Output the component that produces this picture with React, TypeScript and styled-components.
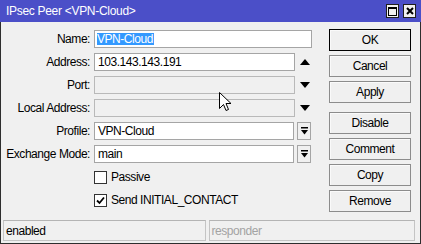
import styled, { createGlobalStyle } from 'styled-components';

const GlobalStyle = createGlobalStyle`
  html, body {
    margin: 0;
    padding: 0;
    background: #f0f0f0;
  }
  * {
    box-sizing: border-box;
  }
`;

const font = `"Liberation Sans", Arial, sans-serif`;

const Window = styled.div`
  position: relative;
  width: 421px;
  height: 244px;
  display: flex;
  flex-direction: column;
  background: #f0f0f0;
  border: 1px solid #2e2e2e;
  border-top: none;
  font-family: ${font};
  font-size: 12px;
  letter-spacing: -0.45px;
  color: #000;
`;

const TitleBar = styled.div`
  height: 22px;
  margin: 0 -1px;
  padding: 0 5px 0 6px;
  display: flex;
  align-items: center;
  background: #4b4fc8;
  color: #fff;
`;

const Title = styled.span`
  flex: 1;
  letter-spacing: -0.3px;
  line-height: 22px;
`;

const TitleButton = styled.div`
  width: 13px;
  height: 14px;
  margin-left: 4px;
  display: flex;
  align-items: center;
  justify-content: center;
  background: #f0f0f0;
  border: 1px solid #1e1e1e;
`;

const Body = styled.div`
  flex: 1;
  display: flex;
`;

const Form = styled.div`
  width: 311px;
  padding: 8px 0 0 1px;
  display: flex;
  flex-direction: column;
  gap: 5px;
`;

const Row = styled.div`
  height: 18px;
  display: flex;
  align-items: center;
`;

const Label = styled.label`
  width: 88px;
  margin-right: 4px;
  text-align: right;
  white-space: nowrap;
`;

const Field = styled.div<{ $width: number; $disabled?: boolean }>`
  width: ${(p) => p.$width}px;
  height: 18px;
  padding-left: 3px;
  display: flex;
  align-items: center;
  white-space: nowrap;
  overflow: hidden;
  background: ${(p) => (p.$disabled ? '#f0f0f0' : '#fff')};
  border: 1px solid ${(p) => (p.$disabled ? '#b9b9b9' : '#a5a5a5')};
`;

const Selected = styled.span`
  background: #3399ff;
  color: #fff;
  padding: 0 1px 0 0;
  margin-left: -1px;
  line-height: 12px;
`;

const Spinner = styled.div`
  width: 16px;
  display: flex;
  justify-content: flex-end;
  padding-right: 1px;
`;

const DropButton = styled.div`
  width: 14px;
  height: 18px;
  margin-left: 3px;
  display: flex;
  align-items: center;
  justify-content: center;
  background: #f0f0f0;
  border: 1px solid #a5a5a5;
`;

const CheckRow = styled.div`
  height: 18px;
  padding-left: 92px;
  display: flex;
  align-items: center;
  gap: 4px;
`;

const CheckBox = styled.div`
  width: 13px;
  height: 13px;
  display: flex;
  align-items: center;
  justify-content: center;
  background: #fff;
  border: 1px solid #333;
`;

const ButtonColumn = styled.div`
  width: 82px;
  margin-left: 17px;
  padding-top: 7px;
  display: flex;
  flex-direction: column;
  gap: 4px;
`;

const Button = styled.div<{ $primary?: boolean; $gapBefore?: boolean }>`
  height: 22px;
  display: flex;
  align-items: center;
  justify-content: center;
  margin-top: ${(p) => (p.$gapBefore ? '5px' : '0')};
  background: #f0f0f0;
  border: 1px solid ${(p) => (p.$primary ? '#000' : '#8c8c8c')};
  box-shadow: inset 1px 1px 0 #fafafa;
`;

const StatusBar = styled.div`
  display: flex;
  gap: 3px;
  padding: 0 5px 2px 2px;
`;

const StatusField = styled.div<{ $width: number; $muted?: boolean }>`
  width: ${(p) => p.$width}px;
  height: 21px;
  padding-left: 2px;
  display: flex;
  align-items: center;
  color: ${(p) => (p.$muted ? '#a3a3a3' : '#000')};
  border: 1px solid #c4c4c4;
  border-top-color: #b4b4b4;
`;

const Cursor = styled.svg`
  position: absolute;
  left: 218px;
  top: 92px;
`;

const Arrow = ({ up }: { up?: boolean }) => (
  <svg width="10" height="6" viewBox="0 0 10 6">
    <path d={up ? 'M0 6 L5 0 L10 6 Z' : 'M0 0 L10 0 L5 6 Z'} fill="#000" />
  </svg>
);

const DropIcon = () => (
  <svg width="7" height="8" viewBox="0 0 7 8">
    <rect x="0" y="0" width="7" height="1.5" fill="#000" />
    <path d="M0 3 L7 3 L3.5 7.5 Z" fill="#000" />
  </svg>
);

const App = () => {
  return (
    <>
      <GlobalStyle />
      <Window>
        <TitleBar>
          <Title>IPsec Peer &lt;VPN-Cloud&gt;</Title>
          <TitleButton>
            <svg width="9" height="9" viewBox="0 0 9 9">
              <rect x="0.5" y="0.5" width="8" height="8" fill="none" stroke="#000" />
              <rect x="0" y="0" width="9" height="2" fill="#000" />
            </svg>
          </TitleButton>
          <TitleButton>
            <svg width="8" height="8" viewBox="0 0 8 8">
              <path d="M1 1 L7 7 M7 1 L1 7" stroke="#000" strokeWidth="2" />
            </svg>
          </TitleButton>
        </TitleBar>
        <Body>
          <Form>
            <Row>
              <Label>Name:</Label>
              <Field $width={218}>
                <Selected>VPN-Cloud</Selected>
              </Field>
            </Row>
            <Row>
              <Label>Address:</Label>
              <Field $width={201}>103.143.143.191</Field>
              <Spinner>
                <Arrow up />
              </Spinner>
            </Row>
            <Row>
              <Label>Port:</Label>
              <Field $width={201} $disabled />
              <Spinner>
                <Arrow />
              </Spinner>
            </Row>
            <Row>
              <Label>Local Address:</Label>
              <Field $width={201} $disabled />
              <Spinner>
                <Arrow />
              </Spinner>
            </Row>
            <Row>
              <Label>Profile:</Label>
              <Field $width={200}>VPN-Cloud</Field>
              <DropButton>
                <DropIcon />
              </DropButton>
            </Row>
            <Row>
              <Label>Exchange Mode:</Label>
              <Field $width={200}>main</Field>
              <DropButton>
                <DropIcon />
              </DropButton>
            </Row>
            <CheckRow>
              <CheckBox />
              <span>Passive</span>
            </CheckRow>
            <CheckRow>
              <CheckBox>
                <svg width="9" height="9" viewBox="0 0 9 9">
                  <path d="M1 4.5 L3.5 7 L8 1.5" fill="none" stroke="#000" strokeWidth="1.8" />
                </svg>
              </CheckBox>
              <span>Send INITIAL_CONTACT</span>
            </CheckRow>
          </Form>
          <ButtonColumn>
            <Button $primary>OK</Button>
            <Button>Cancel</Button>
            <Button>Apply</Button>
            <Button $gapBefore>Disable</Button>
            <Button>Comment</Button>
            <Button>Copy</Button>
            <Button>Remove</Button>
          </ButtonColumn>
        </Body>
        <StatusBar>
          <StatusField $width={203}>enabled</StatusField>
          <StatusField $width={207} $muted>
            responder
          </StatusField>
        </StatusBar>
        <Cursor width="13" height="21" viewBox="0 0 13 21">
          <path
            d="M0.5 0.5 L0.5 16.5 L4.5 12.5 L7 18.5 L9.5 17.5 L7 11.5 L12 11.5 Z"
            fill="#fff"
            stroke="#000"
            strokeWidth="1"
            strokeLinejoin="miter"
          />
        </Cursor>
      </Window>
    </>
  );
};

export default App;
